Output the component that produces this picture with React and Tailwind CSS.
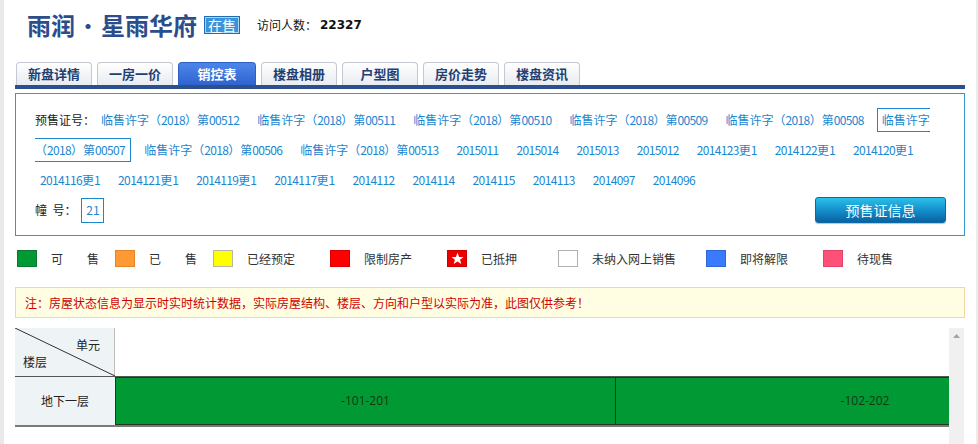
import React from "react";

const tabs = ["新盘详情", "一房一价", "销控表", "楼盘相册", "户型图", "房价走势", "楼盘资讯"];

const row1 = [
  "临售许字（2018）第00512",
  "临售许字（2018）第00511",
  "临售许字（2018）第00510",
  "临售许字（2018）第00509",
  "临售许字（2018）第00508",
];

const row2 = [
  "临售许字（2018）第00506",
  "临售许字（2018）第00513",
  "2015011",
  "2015014",
  "2015013",
  "2015012",
  "2014123更1",
  "2014122更1",
  "2014120更1",
];

const row3 = [
  "2014116更1",
  "2014121更1",
  "2014119更1",
  "2014117更1",
  "2014112",
  "2014114",
  "2014115",
  "2014113",
  "2014097",
  "2014096",
];

const legend = [
  { label: "可\u3000\u3000售", box: "bg-[#009933] border-[#0a7a30]", w: "w-[98px]" },
  { label: "已\u3000\u3000售", box: "bg-[#ff9933] border-[#e0852a]", w: "w-[98px]" },
  { label: "已经预定", box: "bg-[#ffff00] border-[#b8b8a0]", w: "w-[117px]" },
  { label: "限制房产", box: "bg-[#ff0000] border-[#d80000]", w: "w-[117px]" },
  { label: "已抵押", box: "bg-[#ee0000] border-[#cc0000]", w: "w-[111px]", star: true },
  { label: "未纳入网上销售", box: "bg-white border-[#b0b0b0]", w: "w-[148px]" },
  { label: "即将解限", box: "bg-[#3a7bfd] border-[#2f66d8]", w: "w-[117px]" },
  { label: "待现售", box: "bg-[#ff5078] border-[#e04468]", w: "" },
];

// digits in the original are narrower than Noto's, so squeeze the ASCII runs
const Narrow = ({ text }) =>
  text.split(/([\x20-\x7e]+)/).map((part, i) =>
    /^[\x20-\x7e]+$/.test(part) ? (
      <span key={i} className="tracking-[-0.65px]">
        {part}
      </span>
    ) : (
      part
    )
  );

const LinkItem = ({ children }) => (
  <a className="px-[5px] text-[#1c86cf] whitespace-nowrap cursor-pointer">
    <Narrow text={children} />
  </a>
);

export default function App() {
  return (
    <div
      className="flex w-[978px] h-[444px] overflow-hidden bg-white text-[12px] text-[#333]"
      style={{ fontFamily: '"Noto Sans CJK SC", "Liberation Sans", sans-serif' }}
    >
      <div className="w-[4px] shrink-0 bg-[#e9e9e9]" />
      <div className="w-[950px] ml-[11px] shrink-0 flex flex-col">
        {/* Header */}
        <div className="flex items-center h-[30px] mt-[10px] pl-[12px]">
          <h1 className="text-[24px] font-bold text-[#2c4d8c] leading-none">
            雨润<span className="font-normal mx-[1px]">·</span>星雨华府
          </h1>
          <span className="ml-[7px] px-[3px] h-[18px] flex items-center text-[14px] leading-none text-white bg-[#3a94dc] border border-[#1f6db3] shadow-[inset_0_0_0_1px_#a8d4f5]">
            在售
          </span>
          <span className="ml-[17px] text-[12px] text-[#111]">访问人数：</span>
          <span
            className="ml-[3px] text-[12px] font-bold text-[#111]"
            style={{ fontFamily: '"DejaVu Sans", sans-serif' }}
          >
            22327
          </span>
        </div>

        {/* Tabs */}
        <div className="flex items-end gap-[5px] mt-[22px] pl-[1px] border-b-[4px] border-[#2d4f8e]">
          {tabs.map((t) => (
            <div
              key={t}
              className={
                t === "销控表"
                  ? "w-[78px] h-[23px] flex items-center justify-center rounded-t-[4px] text-[13px] font-bold text-white bg-gradient-to-b from-[#4d86ea] to-[#2f63cf] border border-[#2f5fc2] border-b-0"
                  : "w-[76px] h-[23px] flex items-center justify-center rounded-t-[4px] text-[13px] font-bold text-[#233f72] bg-gradient-to-b from-white to-[#e8ebf0] border border-[#c4c8d0] border-b-0"
              }
            >
              {t}
            </div>
          ))}
        </div>

        {/* Presale panel */}
        <div className="mt-[4px] border border-[#3399cc] pl-[19px] pr-[33px] pt-[11px] pb-[10px]">
          <div className="flex items-center h-[30px] overflow-hidden">
            <span className="text-[#222] mr-px whitespace-nowrap">预售证号：</span>
            <div className="flex items-center gap-[8px]">
              {row1.map((l) => (
                <LinkItem key={l}>{l}</LinkItem>
              ))}
              <span className="pl-[4px] h-[24px] flex items-center border border-r-0 border-[#1c86cf] text-[#1c86cf] whitespace-nowrap">
                临售许字
              </span>
            </div>
          </div>
          <div className="flex items-center h-[30px] gap-[8px]">
            <span className="pr-[5px] h-[24px] flex items-center border border-l-0 border-[#1c86cf] text-[#1c86cf] whitespace-nowrap">
              <Narrow text="（2018）第00507" />
            </span>
            <div className="flex items-center gap-[8px]">
              {row2.map((l) => (
                <LinkItem key={l}>{l}</LinkItem>
              ))}
            </div>
          </div>
          <div className="flex items-center h-[30px] gap-[8px]">
            {row3.map((l) => (
              <LinkItem key={l}>{l}</LinkItem>
            ))}
          </div>
          <div className="flex items-center h-[30px] -mr-[15px]">
            <span className="text-[#222] whitespace-nowrap">幢&nbsp;&nbsp;号：</span>
            <span className="ml-[5px] w-[23px] h-[25px] flex items-center justify-center border border-[#1c86cf] text-[#1c86cf]">
              21
            </span>
            <button className="ml-auto w-[131px] h-[26px] rounded-[3px] text-[14px] text-white bg-gradient-to-b from-[#2bc0ea] via-[#1590cc] to-[#0a62a0] border border-[#0b6aa6] shadow-[0_1px_1px_rgba(0,0,0,0.25)]">
              预售证信息
            </button>
          </div>
        </div>

        {/* Legend */}
        <div className="flex items-center h-[17px] mt-[14px] pl-[2px]">
          {legend.map((it) => (
            <div key={it.label} className={`flex items-center gap-[14px] shrink-0 ${it.w}`}>
              <span className={`w-[20px] h-[17px] border flex items-center justify-center ${it.box}`}>
                {it.star && (
                  <svg width="13" height="13" viewBox="0 0 24 24">
                    <polygon
                      fill="#fff"
                      points="12,1.5 15,9 23,9.3 16.8,14.3 19,22.3 12,17.7 5,22.3 7.2,14.3 1,9.3 9,9"
                    />
                  </svg>
                )}
              </span>
              <span className="text-[12px] text-[#333] whitespace-nowrap">{it.label}</span>
            </div>
          ))}
        </div>

        {/* Notice */}
        <div className="mt-[20px] h-[31px] flex items-center px-[9px] bg-[#fffde2] border border-[#f2d6a6] text-[#d00000] text-[12px]">
          注：房屋状态信息为显示时实时统计数据，实际房屋结构、楼层、方向和户型以实际为准，此图仅供参考！
        </div>

        {/* Sales table */}
        <div className="flex mt-[10px] flex-1 min-h-0">
          <div className="w-[934px] overflow-hidden">
            <div className="flex h-[49px] w-[1200px] border-b border-[#555]">
              <div className="relative w-[100px] shrink-0 bg-[#eef3f5] border-r border-[#bbb]">
                <svg className="absolute inset-0" width="100" height="48" viewBox="0 0 100 48">
                  <line x1="0" y1="0" x2="100" y2="48" stroke="#333" strokeWidth="1" />
                </svg>
                <span className="absolute right-[14px] top-[8px] text-[12px] text-[#222]">单元</span>
                <span className="absolute left-[8px] bottom-[5px] text-[12px] text-[#222]">楼层</span>
              </div>
              <div className="flex-1 bg-white" />
            </div>
            <div className="flex h-[50px] w-[1200px] border-b-2 border-[#7a7a7a]">
              <div className="w-[100px] shrink-0 bg-[#eef3f5] flex items-center justify-center text-[12px] text-[#222]">
                地下一层
              </div>
              {["-101-201", "-102-202"].map((c) => (
                <div
                  key={c}
                  className="w-[500px] shrink-0 bg-[#009933] border border-[#1f3a1f] border-r-0 last:border-r flex items-center justify-center text-[12px] text-[#143814]"
                  style={{ fontFamily: '"Open Sans", sans-serif' }}
                >
                  {c}
                </div>
              ))}
            </div>
          </div>
          <div className="w-[15px] shrink-0 bg-[#f0f0f0] flex justify-center pt-[6px]">
            <svg width="7" height="4" viewBox="0 0 7 4">
              <polygon points="3.5,0 7,4 0,4" fill="#a3a3a3" />
            </svg>
          </div>
        </div>
      </div>
      <div className="ml-auto w-[2px] shrink-0 bg-[#ececec]" />
    </div>
  );
}
